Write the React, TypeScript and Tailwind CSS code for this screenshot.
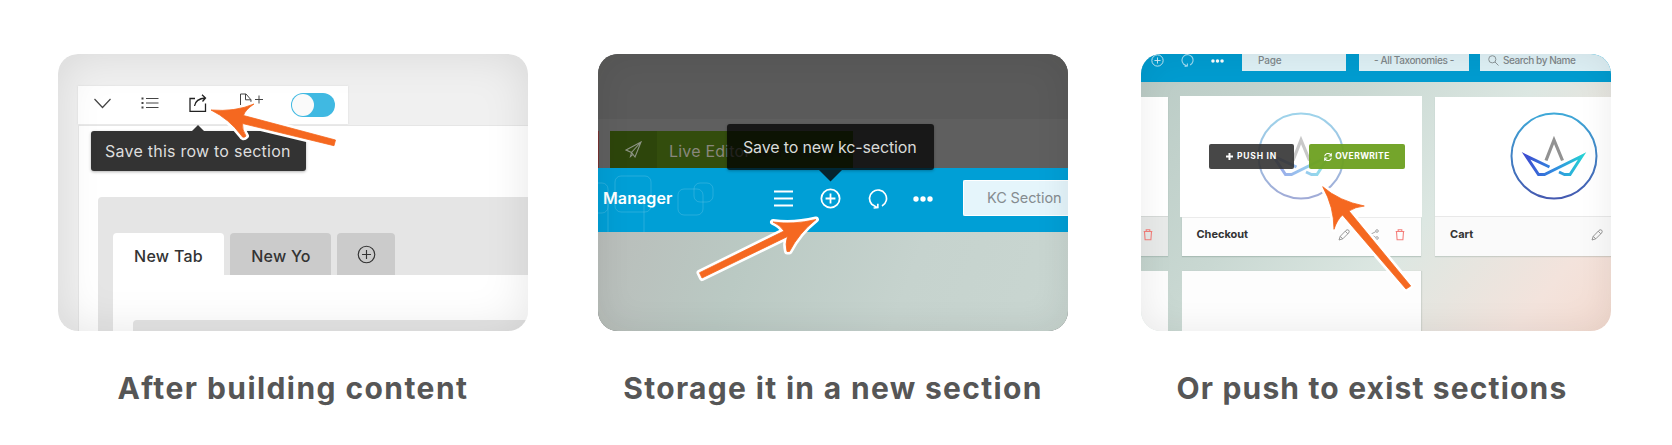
import type { ReactNode } from "react";

function Step({ title, spacing, children }: { title: string; spacing: string; children: ReactNode }) {
  return (
    <section className="flex w-[470px] shrink-0 flex-col">
      <div className="relative h-[277px] overflow-hidden rounded-[20px]">{children}</div>
      <h2 className={`mt-[37px] whitespace-nowrap text-center font-['Inter',sans-serif] text-[30px] font-bold leading-[40px] text-[#565656] ${spacing}`}>
        {title}
      </h2>
    </section>
  );
}

function Arrow({ d }: { d: string }) {
  return (
    <svg className="pointer-events-none absolute inset-0" width="470" height="277" viewBox="0 0 470 277">
      <path d={d} fill="none" stroke="#fff" strokeWidth="6" strokeLinejoin="round" />
      <path d={d} fill="#f56820" stroke="#f56820" strokeWidth="0.8" />
    </svg>
  );
}

function PlusCircle({ size, stroke = 2, className = "" }: { size: number; stroke?: number; className?: string }) {
  return (
    <svg className={`shrink-0 ${className}`} width={size} height={size} viewBox="0 0 20 20" fill="none" stroke="currentColor" strokeWidth={stroke}>
      <circle cx="10" cy="10" r="8.7" />
      <path d="M10 5.3v9.4M5.3 10h9.4" />
    </svg>
  );
}

function Refresh({ size, className = "" }: { size: number; className?: string }) {
  return (
    <svg className={`shrink-0 ${className}`} width={size} height={size} viewBox="0 0 20 20" fill="none" stroke="currentColor" strokeWidth="1.7">
      <path d="M14 17A8.500 8.500 0 1 0 3.800 15.300L8.800 18.400M9.800 14.800V18.600L5.600 19" />
    </svg>
  );
}

function Dots({ width, className = "" }: { width: number; className?: string }) {
  return (
    <svg className={`shrink-0 ${className}`} width={width} height={width * 0.3} viewBox="0 0 20 6" fill="currentColor">
      <circle cx="3" cy="3" r="2.7" />
      <circle cx="10" cy="3" r="2.7" />
      <circle cx="17" cy="3" r="2.7" />
    </svg>
  );
}

function Pencil({ className = "" }: { className?: string }) {
  return (
    <svg className={`shrink-0 ${className}`} width="12" height="12" viewBox="0 0 12 12" fill="none" stroke="#8c8c8c" strokeWidth="0.9">
      <path d="M1 11 2.2 7.4 8 1.4Q9 .2 10.7 1.200 11.800 2.600 10.600 4L4.800 9.800ZM2.200 7.400 4.800 9.800M7.200 2.200 9.800 4.800" />
    </svg>
  );
}

function Trash({ className = "" }: { className?: string }) {
  return (
    <svg className={`shrink-0 ${className}`} width="10" height="12" viewBox="0 0 10 12" fill="none" stroke="#f47f7b" strokeWidth="1.1">
      <path d="M.7 2.5h8.6M1.5 2.5l.6 8.3h5.8l.6-8.3M3.2 2.3V.8h3.6v1.5" />
    </svg>
  );
}

function ShareNodes({ className = "" }: { className?: string }) {
  return (
    <svg className={`shrink-0 ${className}`} width="11" height="11" viewBox="0 0 11 11" fill="none" stroke="#a5a5a5">
      <circle cx="9" cy="2" r="1.3" />
      <circle cx="9" cy="9" r="1.3" />
      <circle cx="2" cy="5.5" r="1.2" />
      <path d="m3.2 5 4.5-2.3M3.2 6l4.5 2.3" />
    </svg>
  );
}

function Emblem({ id, className = "" }: { id: string; className?: string }) {
  return (
    <svg className={`shrink-0 ${className}`} width="88" height="88" viewBox="0 0 88 88" fill="none">
      <defs>
        <linearGradient id={`${id}ring`} x1="0" y1="0" x2="0" y2="1">
          <stop offset="0" stopColor="#3fa9d8" />
          <stop offset="1" stopColor="#4459b0" />
        </linearGradient>
        <linearGradient id={`${id}hull`} gradientUnits="userSpaceOnUse" x1="14" y1="0" x2="74" y2="0">
          <stop offset="0" stopColor="#3d49cf" />
          <stop offset="0.5" stopColor="#328be0" />
          <stop offset="1" stopColor="#25d3d4" />
        </linearGradient>
      </defs>
      <circle cx="44" cy="44" r="42.5" stroke={`url(#${id}ring)`} strokeWidth="2" />
      <path d="M36 48.500 44 28l8.500 20.500" stroke="#929292" strokeWidth="3.2" />
      <path d="M39.500 55 16 43.800 28.500 62.500H34.500L72 44 60 62.500H54.500L49 60" stroke={`url(#${id}hull)`} strokeWidth="3" />
    </svg>
  );
}

function BuildPanel() {
  return (
    <div className="flex h-full flex-col bg-[#f0f0f0] pl-5 pt-8 font-['Inter',sans-serif]">
      <div className="flex h-[38px] w-[270px] shrink-0 items-start bg-white text-[#444] shadow-[0_0_2px_#d8d8d8]">
        <svg className="ml-[15px] mt-3" width="19" height="12" viewBox="0 0 19 12" fill="none" stroke="currentColor" strokeWidth="1.2">
          <path d="m1.500 1 8 8.500L17.500 1" />
        </svg>
        <svg className="ml-[29px] mt-[11px]" width="18" height="12" viewBox="0 0 18 12" stroke="currentColor">
          <path d="M5 1.500h12.500M5 6h12.500M5 10.500h12.500" />
          <path d="M.5 1.500h2M.5 6h2M.5 10.500h2" strokeWidth="1.800" />
        </svg>
        <svg className="ml-[29px] mt-2" width="20" height="19" viewBox="0 0 20 19" fill="none" stroke="#222" strokeWidth="1.300">
          <path d="M7 4.500H2V17.300H17.500V9.500" />
          <path d="M6.500 12Q7.500 4.800 17.500 4M14 .8 17.500 4 14.500 7.500" />
        </svg>
        <svg className="ml-[30px] mt-[7px]" width="26" height="14" viewBox="0 0 26 14" fill="none" stroke="currentColor">
          <path d="M2.500 12V1H8L13 6.800V9M7.500 1V6.800H13M17 6.500h8M21 2.500v8" />
        </svg>
        <div className="ml-[27px] mt-[7px] h-6 w-11 rounded-full bg-[#40b9e2] p-px">
          <div className="size-[22px] rounded-full bg-[#fafafa]" />
        </div>
      </div>
      <div className="mt-px flex flex-1 flex-col border-l border-t border-[#e6e6e6] bg-white pl-[19px] pt-[71px]">
        <div className="flex flex-1 flex-col rounded-tl-sm bg-[#e5e5e5] pl-[15px] pt-9">
          <div className="flex h-[42px] shrink-0 gap-1.5 text-[16px] font-medium leading-[47px] text-[#333]">
            <div className="w-[111px] rounded-t bg-white text-center tracking-[0.25px]">New Tab</div>
            <div className="w-[101px] rounded-t bg-[#cbcbcb] pl-px text-center tracking-[0.2px]">New Yo</div>
            <div className="flex w-[58px] items-center justify-center rounded-t bg-[#cbcbcb]">
              <PlusCircle size={19} stroke={1.2} />
            </div>
          </div>
          <div className="flex flex-1 bg-white pl-5 pt-[45px]">
            <div className="flex-1 rounded-tl-sm bg-[#e5e5e5]" />
          </div>
        </div>
      </div>
      <div className="absolute left-[33px] top-[77px] flex h-10 w-[215px] items-center rounded-[3px] bg-[#333] pl-[14px] shadow-[0_1px_3px_rgba(0,0,0,0.3)]">
        <span className="whitespace-nowrap text-[16px] tracking-[0.24px] text-[#dedede]">Save this row to section</span>
      </div>
      <svg className="absolute left-[133px] top-[71px]" width="14" height="7" viewBox="0 0 14 7">
        <path d="M0 7 7 0l7 7Z" fill="#333" />
      </svg>
      <div className="absolute inset-0 rounded-[20px] shadow-[inset_0_0_45px_rgba(0,0,0,0.1)]" />
      <Arrow d="M153 56Q177 58 196 50 187 56 185.500 61.500L277.500 86 276 91.700 184.500 69.500Q184 76 188 82 185 85 183 81 171 65 153 56Z" />
    </div>
  );
}

function StoragePanel() {
  return (
    <div className="flex h-full flex-col bg-[#5f5f5f] font-['Inter',sans-serif]">
      <div className="h-[65px] shrink-0 bg-[#5a5a5a]" />
      <div className="flex h-[49px] shrink-0 items-end">
        <div className="mr-[11px] h-[37px] w-px bg-[#753030]" />
        <div className="flex h-[37px] w-[243px] items-center bg-[#334d0d]">
          <div className="flex h-full w-[47px] items-center justify-center bg-[#2d450b]">
            <svg width="17" height="17" viewBox="0 0 17 17" fill="none" stroke="#8d9484" strokeWidth="1.100">
              <path d="M1 9 16 1 10 16 6.500 11.500ZM16 1 6.500 11.500 5.500 15.500 8 13.300" />
            </svg>
          </div>
          <span className="ml-3 mt-[3px] whitespace-nowrap text-[16px] leading-5 tracking-[0.2px] text-[#89877c]">
            Live Editor <span className="text-[#33382a]">with KC Pro!</span>
          </span>
        </div>
      </div>
      <div className="relative flex h-16 shrink-0 items-center bg-[#009fd6] text-white">
        <svg className="absolute left-0 top-0" width="120" height="64" fill="none" stroke="#fff" strokeOpacity=".15">
          <rect x="17" y="8" width="36" height="36" rx="6" />
          <rect x="-20" y="15" width="30" height="30" rx="6" />
          <path d="M10 64V35q0-7 7-7h22q7 0 7 7v29" />
          <rect x="80" y="21" width="25" height="26" rx="6" />
          <rect x="96" y="15" width="19" height="19" rx="6" />
        </svg>
        <span className="relative mb-1 ml-[5px] w-[70px] text-[16px] font-semibold leading-5 tracking-[0.1px]">Manager</span>
        <svg className="mb-[3px] ml-[101px]" width="19" height="17" viewBox="0 0 19 17" stroke="#fff" strokeWidth="1.800">
          <path d="M0 1.500h19M0 8.500h19M0 15.500h19" />
        </svg>
        <PlusCircle size={21} stroke={1.7} className="mb-[3px] ml-[27px]" />
        <Refresh size={20} className="mb-[3px] ml-[27px]" />
        <Dots width={20} className="mb-[3px] ml-[25px]" />
        <div className="mb-[4px] ml-[30px] flex h-9 min-w-0 flex-1 items-center rounded-l-[2px] border border-r-0 border-white bg-[#e5f5fb] pl-6 text-[14.5px] text-[#858c90]">
          <span className="-ml-px whitespace-nowrap tracking-[-0.1px]">KC Section</span>
        </div>
      </div>
      <div className="flex-1 bg-[linear-gradient(110deg,#b9bdba_0%,#bac9c3_30%,#c6d3ce_65%,#c9d6d1_100%)]" />
      <div className="absolute left-[129px] top-[70px] flex h-[46px] w-[207px] items-center rounded-[3px] bg-black/75 pl-4 shadow-[0_1px_3px_rgba(0,0,0,0.25)]">
        <span className="whitespace-nowrap text-[16px] leading-[22px] tracking-[-0.15px] text-[#d8dad8]">Save to new kc-section</span>
      </div>
      <svg className="absolute left-[221px] top-[116px]" width="23" height="12" viewBox="0 0 23 12">
        <path d="M0 0h23L11.500 11.500Z" fill="#06242e" />
      </svg>
      <div className="absolute inset-0 rounded-[20px] shadow-[inset_0_0_35px_rgba(20,20,0,0.09)]" />
      <Arrow d="M218 165.500Q201 179 191.500 197.500L189 197.500Q187 190 189.500 182.500L104 224 101.500 218.700 186 177Q182 171 175 168 195 171 218 165.500Z" />
    </div>
  );
}

function PushPanel() {
  return (
    <div className="flex h-full flex-col bg-[linear-gradient(130deg,#b9cac4_0%,#c9d8d2_35%,#dce7e2_60%,#f3e3dc_86%,#f5dcd1_100%)] font-['Inter',sans-serif]">
      <div className="flex h-7 shrink-0 items-start bg-[#009cd0] text-[10px] font-medium leading-[12px] text-[#7f878a]">
        <PlusCircle size={13} stroke={1.4} className="ml-[10px] text-[#d6f0fa]" />
        <Refresh size={13} className="ml-[17px] text-[#a0dbf0]" />
        <Dots width={13} className="ml-[17px] mt-[5px] text-white" />
        <div className="ml-[18px] h-[17px] w-[104px] bg-[#def0f5] pl-4">
          <span className="tracking-[-0.2px]">Page</span>
        </div>
        <div className="ml-[13px] h-[17px] w-[110px] whitespace-nowrap bg-[#def0f5] text-center tracking-[-0.4px]">- All Taxonomies -</div>
        <div className="ml-[11px] flex h-[17px] flex-1 bg-[#def0f5]">
          <svg className="ml-2 mt-px" width="11" height="11" viewBox="0 0 11 11" fill="none" stroke="#8c9699">
            <circle cx="4.300" cy="4.300" r="3.600" />
            <path d="m7 7 3.500 3.500" />
          </svg>
          <span className="ml-[4px] whitespace-nowrap tracking-[-0.45px]">Search by Name</span>
        </div>
      </div>
      <div className="flex h-[174px] shrink-0 items-end">
        <div className="flex h-[159px] w-[27px] shrink-0 flex-col bg-white shadow-[0_1px_1px_rgba(80,110,100,0.2)]">
          <div className="flex-1" />
          <div className="flex h-10 items-center border-t border-[#d5d9d7] bg-[#e8eae9] pb-1 pl-[2px]">
            <Trash />
          </div>
        </div>
        <div className="ml-[12px] flex h-[160px] w-[242px] shrink-0 flex-col items-center">
          <div className="relative h-[121px] w-full bg-white">
            <Emblem id="checkout" className="ml-[77px] mt-[16px] opacity-50" />
            <div className="absolute left-[29px] top-12 flex gap-[15px] text-[8.5px] font-bold leading-none tracking-[0.75px] text-white">
              <div className="flex h-[25px] w-[85px] items-center justify-center gap-1 rounded-[2px] bg-[#333333]/90">
                <svg width="7" height="7" viewBox="0 0 7 7" stroke="#fff" strokeWidth="2"><path d="M3.500 0v7M0 3.500h7" /></svg>
                <span>PUSH IN</span>
              </div>
              <div className="flex h-[25px] w-24 items-center justify-center gap-[3px] rounded-[2px] bg-[#6da020]/95">
                <svg width="8" height="8" viewBox="0 0 8 8" fill="none" stroke="#fff" strokeWidth="1.100">
                  <path d="M.7 3.300A3.300 3.300 0 0 1 6.800 2M7.300.3V3H4.600M7.300 4.700A3.300 3.300 0 0 1 1.200 6M.7 7.700V5h2.700" />
                </svg>
                <span className="tracking-[0.4px]">OVERWRITE</span>
              </div>
            </div>
          </div>
          <div className="flex h-[39px] w-[239px] items-center border-t border-[#ebebeb] bg-[#fdfdfd] pb-[5px] pl-[15px] shadow-[0_1px_1px_rgba(80,110,100,0.25)]">
            <span className="text-[11px] font-bold tracking-[-0.02px] text-[#333]">Checkout</span>
            <Pencil className="ml-auto" />
            <ShareNodes className="ml-[18px]" />
            <Trash className="ml-[16px] mr-[16px]" />
          </div>
        </div>
        <div className="ml-[13px] flex h-[159px] flex-1 flex-col bg-white shadow-[0_1px_1px_rgba(80,110,100,0.2)]">
          <div className="flex-1"><Emblem id="cart" className="ml-[75px] mt-[15px]" /></div>
          <div className="flex h-10 items-center border-t border-[#e8e8e8] bg-[#fafafa] pb-1 pl-[15px]">
            <span className="text-[11px] font-bold text-[#333]">Cart</span>
            <Pencil className="ml-auto mr-2" />
          </div>
        </div>
      </div>
      <div className="mt-[15px] flex flex-1 gap-[14px]">
        <div className="w-[27px] bg-[#fcfcfc]" />
        <div className="w-[239px] bg-[#fdfdfd] shadow-[1px_0_1px_rgba(80,110,100,0.15)]" />
      </div>
      <div className="absolute inset-0 rounded-[20px] shadow-[inset_0_0_35px_rgba(0,0,0,0.08)]" />
      <Arrow d="M181.700 132.700Q198 147 223.300 152 214 153 208 157L269.700 232 265 235 201.500 161Q196 166 193 175.300 193 153 181.700 132.700Z" />
    </div>
  );
}

export default function App() {
  return (
    <main className="flex h-[445px] w-[1672px] overflow-hidden bg-white pl-[58px] pt-[54px]">
      <Step title="After building content" spacing="tracking-[1.43px]"><BuildPanel /></Step>
      <div className="w-[70px] shrink-0" />
      <Step title="Storage it in a new section" spacing="tracking-[1.32px]"><StoragePanel /></Step>
      <div className="w-[73px] shrink-0" />
      <Step title="Or push to exist sections" spacing="tracking-[1.16px] pr-2"><PushPanel /></Step>
    </main>
  );
}
